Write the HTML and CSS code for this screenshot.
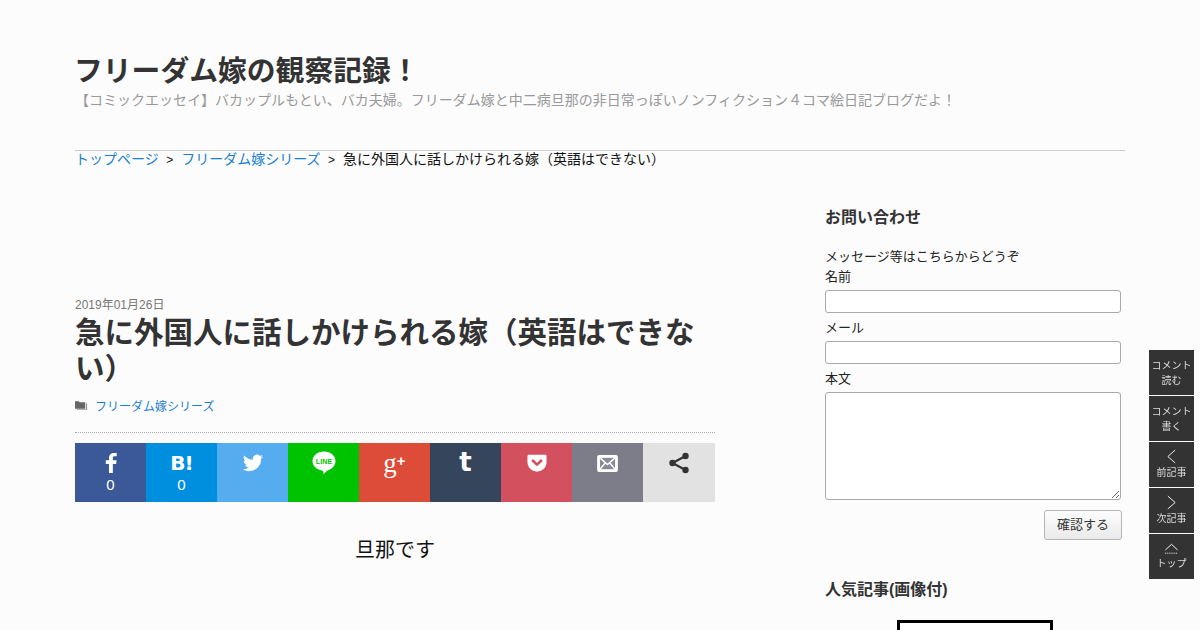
FILE: index.html
```html
<!DOCTYPE html>
<html lang="ja">
<head>
<meta charset="utf-8">
<title>フリーダム嫁の観察記録！</title>
<link rel="stylesheet" href="styles.css">
</head>
<body>
<div class="wrap">
  <header class="site-head">
    <h1 class="site-title">フリーダム嫁の観察記録！</h1>
    <p class="tagline">【コミックエッセイ】バカップルもとい、バカ夫婦。フリーダム嫁と中二病旦那の非日常っぽいノンフィクション４コマ絵日記ブログだよ！</p>
  </header>
  <nav class="crumbs"><a href="#">トップページ</a><span class="sep">&gt;</span><a href="#">フリーダム嫁シリーズ</a><span class="sep">&gt;</span><span>急に外国人に話しかけられる嫁（英語はできない）</span></nav>
  <div class="columns">
    <main class="main">
      <div class="date">2019年01月26日</div>
      <h2 class="entry-title">急に外国人に話しかけられる嫁（英語はできない）</h2>
      <div class="cat">
        <svg class="cat-icon" viewBox="0 0 14 11" width="13" height="11"><path fill="#666" d="M0 1h4l1 1h6v7H0z"/><path fill="#666" d="M12.2 3H13v7.2H2V9.5h10.2z"/></svg>
        <a href="#">フリーダム嫁シリーズ</a>
      </div>
      <div class="shares">
        <a class="share fb"><svg viewBox="0 0 24 24" width="22" height="22"><path fill="#fff" d="M14 23v-10h3.600l.5-4H14V6.600c0-1.200.4-1.900 2-1.900h2.200V1.200C17.800 1.100 16.500 1 15.200 1 12 1 9.800 3 9.800 6.200V9H6.300v4h3.500v10z"/></svg><b>0</b></a>
        <a class="share hb"><span class="hb-mark">B!</span><b>0</b></a>
        <a class="share tw"><svg viewBox="0 0 24 24" width="22" height="22"><path fill="#fff" d="M23 5.100c-.8.400-1.700.6-2.600.7.900-.6 1.700-1.400 2-2.500-.9.500-1.900.9-2.900 1.100a4.500 4.500 0 0 0-7.700 4.100C8 8.300 4.700 6.500 2.500 3.800c-1.200 2-.6 4.600 1.400 6-.7 0-1.400-.2-2-.6 0 2.200 1.500 4.100 3.600 4.500-.7.200-1.400.2-2 .1.600 1.800 2.200 3.100 4.200 3.100A9 9 0 0 1 1 18.800 12.800 12.800 0 0 0 20.700 7.400c.9-.6 1.700-1.400 2.300-2.300z"/></svg></a>
        <a class="share ln"><svg viewBox="0 0 24 24" width="24" height="24"><path fill="#fff" d="M12 0.500C5.600 0.500.5 4.700.5 10c0 4.900 4.200 8.700 9.500 9.400.8.100 1.200.5 1.300 1.200l.2 2.600 3.800-3.600c1.500-.5 2.800-1 4.200-2 2.400-1.800 4-4.400 4-7.600C23.500 4.700 18.400.5 12 .5z"/><text class="line-txt" x="12" y="12.700" text-anchor="middle">LINE</text></svg></a>
        <a class="share gp"><span class="gp-mark">g<i>+</i></span></a>
        <a class="share tb"><span class="tb-mark">t</span></a>
        <a class="share pk"><svg viewBox="0 0 22 22" width="20" height="20"><path fill="#fff" d="M2 2h18c1 0 1.500.6 1.500 1.500V10c0 6-4.800 10.500-10.500 10.500S.5 16 .5 10V3.500C.5 2.600 1 2 2 2z"/><path fill="none" stroke="#d3505f" stroke-width="3" stroke-linecap="round" stroke-linejoin="round" d="M6.500 8.500L11 12.800l4.500-4.300"/></svg></a>
        <a class="share ml"><svg viewBox="0 0 22 18" width="21" height="17"><rect width="22" height="18" rx="2" fill="#fff"/><rect x="3" y="3" width="16" height="12" fill="#8a8a94"/><path fill="none" stroke="#fff" stroke-width="1.600" d="M3 3l8 7 8-7M3 15l5.800-6.800M19 15l-5.800-6.800"/></svg></a>
        <a class="share mr"><svg viewBox="0 0 22 22" width="22" height="22"><path fill="none" stroke="#333" stroke-width="2.200" d="M17.500 4L4.500 11l13 7"/><circle cx="17.500" cy="4" r="3.200" fill="#333"/><circle cx="4.500" cy="11" r="3.200" fill="#333"/><circle cx="17.500" cy="18" r="3.200" fill="#333"/></svg></a>
      </div>
      <p class="lead">旦那です</p>
    </main>
    <aside class="side">
      <h3 class="side-title">お問い合わせ</h3>
      <form class="contact">
        <div class="msg">メッセージ等はこちらからどうぞ</div>
        <label class="lbl">名前</label>
        <input class="field" type="text">
        <label class="lbl">メール</label>
        <input class="field" type="text">
        <label class="lbl">本文</label>
        <textarea class="area"></textarea>
        <div class="submit-row"><button class="submit" type="button">確認する</button></div>
      </form>
      <h3 class="side-title pop">人気記事(画像付)</h3>
      <div class="thumb"></div>
    </aside>
  </div>
</div>
<div class="float-nav">
  <a class="fbtn"><span>コメント</span><span>読む</span></a>
  <a class="fbtn"><span>コメント</span><span>書く</span></a>
  <a class="fbtn"><svg viewBox="0 0 12 16" width="11" height="15"><path fill="none" stroke="#fff" d="M10 1L2 8l8 7"/></svg><span>前記事</span></a>
  <a class="fbtn"><svg viewBox="0 0 12 16" width="11" height="15"><path fill="none" stroke="#fff" d="M2 1l8 7-8 7"/></svg><span>次記事</span></a>
  <a class="fbtn"><svg viewBox="0 0 16 12" width="15" height="12"><path fill="none" stroke="#fff" d="M1.500 7L8 1l6.500 6"/><path stroke="#fff" stroke-dasharray="1 1" d="M1 10.500h14"/></svg><span>トップ</span></a>
</div>
</body>
</html>
```
FILE: styles.css
```css
* { box-sizing: border-box; }
html, body { margin: 0; padding: 0; height: 630px; overflow: hidden; }
body {
  background: #fcfcfc;
  color: #000;
  font-family: "Liberation Sans", "Noto Sans CJK JP", sans-serif;
  font-size: 14px;
}
a { color: #1b7fd1; text-decoration: none; }
.wrap { width: 1050px; margin-left: 75px; }
.site-head { height: 151px; border-bottom: 1px solid #ccc; padding-top: 53px; }
.site-title { margin: 0 0 0 -1px; font-size: 28.8px; line-height: 36px; color: #333; font-weight: 700; }
.tagline { margin: 1px 0 0; font-size: 14px; line-height: 20px; color: #999; white-space: nowrap; }
.crumbs { font-size: 14px; line-height: 18px; height: 18px; margin-top: -1px; white-space: nowrap; color: #111; }
.sep { margin: 0 8px 0 7.5px; font-size: 12px; }
.columns { display: flex; margin-top: 29px; }
.main { width: 640px; margin-right: 110px; padding-top: 100px; }
.date { font-size: 12px; line-height: 16px; color: #777; }
.entry-title { margin: 2px 0 0; font-size: 29.5px; line-height: 36px; font-weight: 700; color: #333; }
.cat { display: flex; align-items: center; margin-top: 8px; height: 20px; font-size: 12px; }
.cat-icon { margin-right: 7px; }
.shares { display: flex; width: 640px; height: 59px; margin-top: 28px; position: relative; }
.shares::before { content: ""; position: absolute; left: 0; right: 0; top: -11px; border-top: 1px dotted #aaa; }
.share { width: 71px; height: 59px; display: flex; flex-direction: column; align-items: center; padding-top: 9px; color: #fff; }
.share b { font-weight: 400; font-size: 15px; line-height: 16px; margin-top: 3px; }
.share.mr { width: 72px; }
.fb { background: #3b5998; }
.hb { background: #008fde; }
.tw { background: #55acee; }
.ln { background: #00c300; padding-top: 8px; }
.gp { background: #dd4b39; }
.tb { background: #35465c; }
.pk { background: #d3505f; padding-top: 10px; }
.ml { background: #7d7d89; padding-top: 12px; }
.mr { background: #e2e2e2; padding-top: 9px; }
.hb-mark { font-size: 20px; line-height: 22px; font-weight: 700; letter-spacing: -1px; font-family: "DejaVu Sans", sans-serif; }
.line-txt { font-family: "Liberation Sans", sans-serif; font-size: 7.2px; font-weight: 700; fill: #00c300; }
.gp-mark { font-family: "Liberation Serif", serif; font-size: 27px; line-height: 22px; margin-top: -2px; }
.gp-mark i { font-style: normal; font-size: 15px; vertical-align: 6px; font-family: "Liberation Sans", sans-serif; font-weight: 700; }
.tb-mark { font-family: "DejaVu Sans", sans-serif; font-weight: 700; font-size: 26px; line-height: 24px; margin-top: -2px; }
.lead { margin: 34px 0 0; font-size: 20px; line-height: 28px; text-align: center; color: #111; }
.side { width: 300px; padding-top: 9px; }
.side-title { margin: 0; font-size: 16px; line-height: 24px; color: #333; font-weight: 700; }
.contact { margin-top: 16px; font-size: 13px; }
.msg { line-height: 21px; color: #222; }
.lbl { display: block; line-height: 20px; color: #222; }
.field { display: block; width: 296px; height: 23px; margin: 3px 0 5px; border: 1px solid #a9a9a9; border-radius: 3px; background: #fff; padding: 0; }
.area { display: block; width: 296px; height: 108px; margin: 3px 0 0; border: 1px solid #a9a9a9; border-radius: 3px; background: #fff; padding: 0; }
.submit-row { display: flex; justify-content: flex-end; width: 297px; margin-top: 10px; }
.submit { width: 78px; height: 30px; border: 1px solid #b5b5b5; border-radius: 3px; background: linear-gradient(#fdfdfd, #eaeaea); font: inherit; color: #333; padding: 0 0 3px; }
.pop { margin-top: 38px; }
.thumb { width: 156px; height: 60px; margin: 18px 0 0 72px; border: 3px solid #000; background: #fff; }
.float-nav { position: fixed; left: 1149px; top: 350px; width: 45px; display: flex; flex-direction: column; gap: 1px; }
.fbtn { width: 45px; height: 45px; background: #333; color: #ddd; font-size: 10px; line-height: 15px; display: flex; flex-direction: column; align-items: center; justify-content: center; white-space: nowrap; }
.fbtn svg { margin-bottom: 1px; }
```
